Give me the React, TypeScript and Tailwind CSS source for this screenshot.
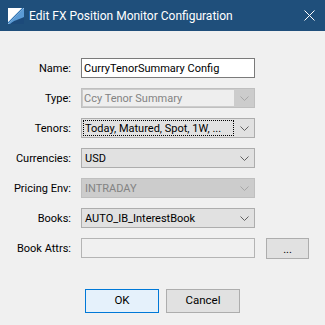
import React from "react";

function Chevron({ color }: { color: string }) {
  return (
    <svg width="9" height="5" viewBox="0 0 9 5" className="block">
      <path d="M0.5 0.5 L4.5 4.5 L8.5 0.5" fill="none" stroke={color} strokeWidth="1" />
    </svg>
  );
}

function Label({ text }: { text: string }) {
  return <div className="w-[81px] shrink-0 text-right pr-[10px] text-black">{text}</div>;
}

export default function App() {
  return (
    <div className="w-[325px] h-[325px] bg-[#f0f0f0] flex flex-col font-['Roboto',sans-serif] text-[11px] leading-none overflow-hidden">
      <div className="h-[31px] shrink-0 bg-[#1f4f7b] flex items-center pl-[8px] pr-[10px] text-white">
        <svg width="16" height="16" viewBox="0 0 16 16" className="mr-[5px]">
          <rect x="0" y="0" width="16" height="16" fill="#ffffff" />
          <path d="M0 16 L16 0 L16 16 Z" fill="#5b9bd5" />
          <path d="M2 16 C6 12 10 12 16 9 L16 16 Z" fill="#1c4a7a" />
          <path d="M0 15 L15 0" stroke="#2e75b6" strokeWidth="1.2" />
        </svg>
        <span className="text-[12px]">Edit FX Position Monitor Configuration</span>
        <svg width="11" height="11" viewBox="0 0 11 11" className="ml-auto">
          <path d="M0.5 0.5 L10.5 10.5 M10.5 0.5 L0.5 10.5" stroke="#ffffff" strokeWidth="1" />
        </svg>
      </div>

      <div className="pt-[27px] flex flex-col gap-[10px]">
        <div className="flex items-center h-[20px]">
          <Label text="Name:" />
          <div className="w-[174px] h-[20px] border border-[#7a7a7a] bg-white flex items-center pl-[2px] text-black">
            CurryTenorSummary Config
          </div>
        </div>

        <div className="flex items-center h-[20px]">
          <Label text="Type:" />
          <div className="w-[174px] h-[20px] border border-[#bfbfbf] bg-[#cccccc] flex items-stretch">
            <div className="flex-1 m-[1px] bg-[#eeeeee] flex items-center pl-[1px] text-[#838383]">
              Ccy Tenor Summary
            </div>
            <div className="w-[19px] flex items-center justify-center">
              <Chevron color="#a6a6a6" />
            </div>
          </div>
        </div>

        <div className="flex items-center h-[20px]">
          <Label text="Tenors:" />
          <div className="w-[174px] h-[20px] border border-[#adadad] bg-[#e1e1e1] flex items-stretch">
            <div className="flex-1 m-[1px] border border-dotted border-black flex items-center pl-[1px] text-black whitespace-nowrap overflow-hidden">
              Today, Matured, Spot, 1W, ...
            </div>
            <div className="w-[19px] flex items-center justify-center">
              <Chevron color="#606060" />
            </div>
          </div>
        </div>

        <div className="flex items-center h-[20px]">
          <Label text="Currencies:" />
          <div className="w-[174px] h-[20px] border border-[#adadad] bg-[#e1e1e1] flex items-stretch">
            <div className="flex-1 flex items-center pl-[3px] text-black">USD</div>
            <div className="w-[19px] flex items-center justify-center">
              <Chevron color="#606060" />
            </div>
          </div>
        </div>

        <div className="flex items-center h-[20px]">
          <Label text="Pricing Env:" />
          <div className="w-[174px] h-[20px] border border-[#bfbfbf] bg-[#cccccc] flex items-stretch">
            <div className="flex-1 flex items-center pl-[3px] text-[#838383]">INTRADAY</div>
            <div className="w-[19px] flex items-center justify-center">
              <Chevron color="#a6a6a6" />
            </div>
          </div>
        </div>

        <div className="flex items-center h-[20px]">
          <Label text="Books:" />
          <div className="w-[174px] h-[20px] border border-[#adadad] bg-[#e1e1e1] flex items-stretch">
            <div className="flex-1 flex items-center pl-[3px] text-black">AUTO_IB_InterestBook</div>
            <div className="w-[19px] flex items-center justify-center">
              <Chevron color="#606060" />
            </div>
          </div>
        </div>

        <div className="flex items-center h-[20px]">
          <Label text="Book Attrs:" />
          <div className="w-[174px] h-[20px] border border-[#b4b4b4] bg-[#f0f0f0]" />
          <div className="ml-[11px] w-[43px] h-[21px] border border-[#adadad] bg-[#e1e1e1] flex items-center justify-center pt-[2px] text-black">
            ...
          </div>
        </div>
      </div>

      <div className="mt-[31px] flex justify-center gap-[7px]">
        <div className="w-[74px] h-[24px] border border-[#0078d7] bg-[#e5f1fb] flex items-center justify-center text-black text-[11.5px]">
          OK
        </div>
        <div className="w-[74px] h-[24px] border border-[#adadad] bg-[#e1e1e1] flex items-center justify-center text-black text-[11.5px]">
          Cancel
        </div>
      </div>
    </div>
  );
}
